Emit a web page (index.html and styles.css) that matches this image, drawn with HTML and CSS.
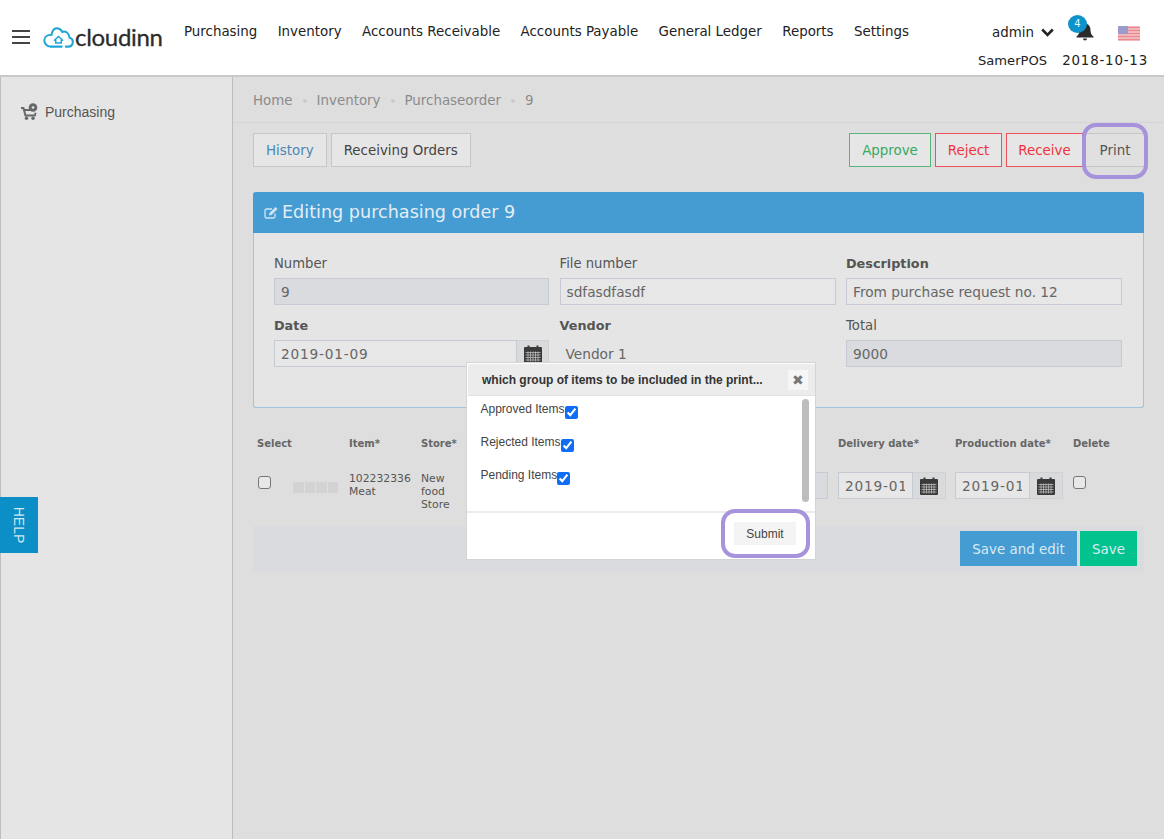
FILE: index.html
```html
<!DOCTYPE html>
<html lang="en">
<head>
    <meta charset="UTF-8">
    <meta name="viewport" content="width=device-width, initial-scale=1.0">
    <title>Editing purchasing order 9</title>
    <link rel="stylesheet" href="styles.css">
</head>
<body>

<svg class="defs" width="0" height="0">
    <symbol id="calendar" viewBox="0 0 18 18">
        <path fill="#3a3a3a" d="M1 2h2.5V0.5h2V2h7V0.5h2V2H17a1 1 0 0 1 1 1v14a1 1 0 0 1-1 1H1a1 1 0 0 1-1-1V3a1 1 0 0 1 1-1z"/>
        <path stroke="#bbb" stroke-width="0.8" fill="none" d="M1.5 7.5h15M1.5 10h15M1.5 12.5h15M1.5 15h15M4 6.5v10M6.5 6.5v10M9 6.5v10M11.5 6.5v10M14 6.5v10"/>
    </symbol>
</svg>

<header class="topbar">
    <svg class="burger" width="18" height="14" viewBox="0 0 18 14"><path stroke="#444" stroke-width="2" d="M0 1h18M0 7h18M0 13h18"/></svg>
    <div class="logo">
        <svg width="31" height="22" viewBox="0 0 33 24" fill="none" stroke="#1fa5d8" stroke-width="2.200" stroke-linecap="round">
            <path d="M24.500 22.500h2.500a5 5 0 0 0 1.500-9.800C28 7.500 24 5 20.500 6.500 18.500 2 12 0.500 10 6c-.5 1-1 2-1 3.500C5 9.500 1 11.500 1 15.500c0 4 3 7 7 7h12"/>
            <path stroke-width="1.600" d="M12 15.500l4.500-4 4.500 4M13.500 15v3.500h6V15"/>
        </svg>
        <span class="logo-text">cloudinn</span>
    </div>
    <nav class="mainnav">
        <a href="#">Purchasing</a>
        <a href="#">Inventory</a>
        <a href="#">Accounts Receivable</a>
        <a href="#">Accounts Payable</a>
        <a href="#">General Ledger</a>
        <a href="#">Reports</a>
        <a href="#">Settings</a>
    </nav>
    <div class="userbox">
        <div class="userrow">
            <span>admin</span>
            <svg class="chevron" width="13" height="9" viewBox="0 0 13 9"><path fill="none" stroke="#222" stroke-width="2.600" d="M1.200 1.500l5.300 5.300 5.300-5.300"/></svg>
            <span class="bell">
                <svg width="18" height="20" viewBox="0 0 18 20"><path fill="#2b2b2b" d="M9 1.500c.8 0 1.400.6 1.400 1.300C13 3.500 14.500 6 14.500 9c0 3 .8 5 3 6.500v1H.5v-1c2.200-1.500 3-3.500 3-6.500 0-3 1.500-5.500 4.100-6.200 0-.7.600-1.300 1.400-1.300zM7 17.500h4a2 2 0 0 1-4 0z"/></svg>
                <span class="badge">4</span>
            </span>
            <svg class="flag" width="22" height="15" viewBox="0 0 22 15">
                <rect width="22" height="15" rx="1.500" fill="#f5c6c8"/>
                <path stroke="#e98a90" stroke-width="1.300" d="M0 1.500h22M0 4.500h22M0 7.500h22M0 10.500h22M0 13.500h22"/>
                <rect width="10" height="8" rx="1" fill="#9a9dcc"/>
            </svg>
        </div>
        <div class="userrow second">
            <span class="shop">SamerPOS</span>
            <span class="date-val">2018-10-13</span>
        </div>
    </div>
</header>

<div class="layout">
    <aside class="sidebar">
        <a class="side-link" href="#">
            <svg width="17" height="17" viewBox="0 0 17 17" fill="#65676a"><path d="M0 4h3.200l.6 2H9v2H4.300l.9 3.500h8l.5-2 1.800.4-.9 3.600H3.700L1.700 6H0z"/><circle cx="5.500" cy="15.300" r="1.700"/><circle cx="12" cy="15.300" r="1.700"/><circle cx="12" cy="4.500" r="4.300"/><circle cx="12" cy="4.500" r="1.300" fill="#e5e5e5"/></svg>
            Purchasing
        </a>
    </aside>

    <main class="content">
        <div class="breadcrumb">
            <span>Home</span><i></i><span>Inventory</span><i></i><span>Purchaseorder</span><i></i><span>9</span>
        </div>

        <div class="toolbar">
            <div class="tabs">
                <button class="btn btn-history">History</button>
                <button class="btn">Receiving Orders</button>
            </div>
            <div class="actions">
                <button class="btn btn-approve">Approve</button>
                <button class="btn btn-red btn-reject">Reject</button>
                <button class="btn btn-red btn-receive">Receive</button>
                <button class="btn btn-print">Print<span class="ring ring-print"></span></button>
            </div>
        </div>

        <section class="panel">
            <h2 class="panel-title">
                <svg width="14" height="13" viewBox="0 0 14 13" fill="none" stroke="#cfe4f3" stroke-width="1.300"><path d="M11 7.500v3a1.500 1.500 0 0 1-1.500 1.500h-7A1.500 1.500 0 0 1 1 10.500v-6A1.500 1.500 0 0 1 2.500 3H8"/><path fill="#cfe4f3" stroke="none" d="M11.500 1l2 2-6 6-2.500.5.500-2.500z"/></svg>
                Editing purchasing order 9
            </h2>
            <div class="panel-body">
                <div class="field">
                    <label>Number</label>
                    <input class="input locked" type="text" value="9" readonly>
                </div>
                <div class="field">
                    <label>File number</label>
                    <input class="input" type="text" value="sdfasdfasdf">
                </div>
                <div class="field">
                    <label class="strong">Description</label>
                    <input class="input" type="text" value="From purchase request no. 12">
                </div>
                <div class="field">
                    <label class="strong">Date</label>
                    <div class="date-group">
                        <input class="input date-val" type="text" value="2019-01-09">
                        <span class="date-btn"><svg width="18" height="18"><use href="#calendar"/></svg></span>
                    </div>
                </div>
                <div class="field">
                    <label class="strong">Vendor</label>
                    <div class="static-value">Vendor 1</div>
                </div>
                <div class="field">
                    <label>Total</label>
                    <input class="input locked" type="text" value="9000" readonly>
                </div>
            </div>
        </section>

        <div class="items-grid">
            <div class="th">Select</div>
            <div class="th"></div>
            <div class="th">Item*</div>
            <div class="th">Store*</div>
            <div class="th"></div>
            <div class="th">Delivery date*</div>
            <div class="th">Production date*</div>
            <div class="th">Delete</div>

            <div class="td"><input class="row-check first" type="checkbox"></div>
            <div class="td"><div class="thumbs"><b></b><b></b><b></b><b></b></div></div>
            <div class="td small">102232336<br>Meat</div>
            <div class="td small">New<br>food<br>Store</div>
            <div class="td"><input class="input stub" type="text"></div>
            <div class="td">
                <div class="date-group">
                    <input class="input date-val" type="text" value="2019-01-09">
                    <span class="date-btn"><svg width="18" height="18"><use href="#calendar"/></svg></span>
                </div>
            </div>
            <div class="td">
                <div class="date-group">
                    <input class="input date-val" type="text" value="2019-01-09">
                    <span class="date-btn"><svg width="18" height="18"><use href="#calendar"/></svg></span>
                </div>
            </div>
            <div class="td"><input class="row-check" type="checkbox"></div>
        </div>

        <div class="savebar">
            <button class="btn-save blue">Save and edit</button>
            <button class="btn-save green">Save</button>
        </div>
    </main>
</div>

<a class="help-tab" href="#"><span>HELP</span></a>

<div class="modal">
    <div class="modal-head">
        <span class="modal-title">which group of items to be included in the print...</span>
        <span class="modal-close">&#10006;</span>
    </div>
    <div class="modal-body">
        <div class="check-row"><label>Approved Items</label><input type="checkbox" checked></div>
        <div class="check-row"><label>Rejected Items</label><input type="checkbox" checked></div>
        <div class="check-row"><label>Pending Items</label><input type="checkbox" checked></div>
        <div class="scroll-thumb"></div>
    </div>
    <div class="modal-foot">
        <button class="btn-submit">Submit<span class="ring ring-submit"></span></button>
    </div>
</div>

</body>
</html>
```

FILE: styles.css
```css
* {
    box-sizing: border-box;
}
html, body {
    margin: 0;
    height: 839px;
    overflow: hidden;
}
body {
    font-family: "DejaVu Sans", sans-serif;
    font-size: 13.400px;
    color: #444;
    background-color: #dedede;
    position: relative;
}
a {
    color: inherit;
    text-decoration: none;
}
.defs {
    position: absolute;
}
.date-val {
    letter-spacing: 0.8px;
}

/* top bar */
.topbar {
    height: 77px;
    background-color: #fff;
    border-bottom: 2px solid #c9c9c9;
    display: flex;
    align-items: flex-start;
    padding-left: 12px;
}
.burger {
    margin-top: 30px;
}
.logo {
    display: flex;
    flex: none;
    align-items: center;
    margin-left: 13px;
    margin-top: 25px;
    width: 141px;
}
.logo-text {
    font-family: Lato, sans-serif;
    font-size: 24px;
    line-height: 24px;
    color: #2c2c2c;
    margin-left: 1px;
    letter-spacing: -0.3px;
    -webkit-text-stroke: 0.3px #2c2c2c;
}
.mainnav {
    display: flex;
    gap: 20.400px;
    margin-top: 23px;
    line-height: 18px;
    color: #222;
}
.userbox {
    margin-left: auto;
    padding-right: 16px;
    width: 186px;
    color: #222;
}
.userrow {
    display: flex;
    align-items: center;
    height: 22px;
    margin-top: 21px;
    padding-left: 14px;
}
.userrow.second {
    margin-top: 6px;
    padding-left: 0;
    justify-content: space-between;
}
.shop {
    font-size: 13.100px;
}
.chevron {
    margin-left: 7px;
}
.bell {
    position: relative;
    margin-left: 22px;
    margin-top: -2px;
    display: flex;
}
.badge {
    position: absolute;
    left: -8px;
    top: -6px;
    width: 19px;
    height: 18px;
    border-radius: 50%;
    background-color: #0d93c9;
    color: #dff;
    font-size: 10px;
    line-height: 18px;
    text-align: center;
}
.flag {
    margin-left: 24px;
    margin-top: 2px;
}

/* sidebar + content */
.layout {
    display: flex;
    height: 762px;
}
.sidebar {
    width: 233px;
    background-color: #e5e5e5;
    border-left: 1px solid #bdbdbd;
    border-right: 1px solid #bdbdbd;
    padding: 26px 0 0 20px;
}
.side-link {
    display: flex;
    align-items: center;
    gap: 7px;
    color: #555;
    font-family: "Liberation Sans", sans-serif;
    font-size: 14px;
}
.content {
    flex: 1;
    padding: 0 20px;
    position: relative;
}
.breadcrumb {
    height: 46px;
    margin-left: -20px;
    margin-right: -20px;
    padding: 2px 0 0 20px;
    border-bottom: 1px solid #d5d5d5;
    display: flex;
    align-items: center;
    gap: 10px;
    color: #8b8b8b;
}
.breadcrumb i {
    width: 4px;
    height: 4px;
    background-color: #cbcbcb;
    border-radius: 50%;
}
.toolbar {
    display: flex;
    justify-content: space-between;
    margin-top: 10px;
}
.tabs, .actions {
    display: flex;
    gap: 4px;
}
.btn {
    height: 34px;
    padding: 0 12px;
    font-family: inherit;
    font-size: 13.400px;
    background-color: #e6e6e6;
    border: 1px solid #c4c6c8;
    color: #444;
}
.btn-history {
    color: #4b87b5;
}
.btn-approve {
    width: 82px;
    padding: 0;
    color: #37a963;
    border-color: #5cb47d;
}
.btn-red {
    padding: 0;
    color: #f0323c;
    border-color: #ee5158;
}
.btn-reject {
    width: 67px;
}
.btn-receive {
    width: 77px;
}
.btn-print {
    position: relative;
    width: 61px;
    padding: 0 0 0 3px;
    color: #555;
    margin-left: -4px;
    background-color: #e0e0e0;
    border-width: 1px 0;
}
.ring {
    position: absolute;
    border: 4px solid #a693dc;
    border-radius: 14px;
    pointer-events: none;
}
.ring-print {
    left: -1px;
    top: -11px;
    right: -4px;
    bottom: -13px;
}
.ring-submit {
    left: -13px;
    top: -13px;
    right: -14px;
    bottom: -13px;
}

/* order panel */
.panel {
    margin-top: 25px;
    height: 216px;
    background-color: #e5e5e5;
    border: 1px solid #9fc4dd;
    border-top: 0;
    border-radius: 3px;
}
.panel-title {
    margin: 0 -1px;
    height: 41px;
    background-color: #459cd3;
    border-radius: 3px 3px 0 0;
    color: #e4edf4;
    font-size: 17.600px;
    font-weight: normal;
    display: flex;
    align-items: center;
    gap: 4px;
    padding: 0 0 1px 11px;
}
.panel-body {
    display: grid;
    grid-template-columns: 275px 276px 276px;
    column-gap: 10.500px;
    row-gap: 11px;
    padding: 21px 0 0 20px;
}
.field label {
    display: block;
    height: 24px;
    line-height: 20px;
    font-size: 13.200px;
    color: #555;
}
.field label.strong {
    font-size: 12.800px;
    font-weight: bold;
}
.input {
    display: block;
    width: 100%;
    height: 27px;
    padding: 0 6px;
    font-family: inherit;
    font-size: 13.700px;
    color: #666;
    background-color: #e7e7e7;
    border: 1px solid #c6cbd3;
    border-radius: 0;
    outline: none;
}
.input.locked {
    background-color: #d9dbdf;
}
.date-group {
    display: flex;
}
.date-group .input {
    flex: 1;
    min-width: 0;
}
.date-btn {
    width: 32px;
    height: 27px;
    flex: none;
    background-color: #d9dadb;
    border: 1px solid #cfd1d4;
    border-left: 0;
    display: flex;
    align-items: center;
    justify-content: center;
}
.static-value {
    height: 27px;
    line-height: 28px;
    padding-left: 6px;
    color: #666;
    font-size: 13.700px;
}

/* item table */
.items-grid {
    display: grid;
    grid-template-columns: 36px 56px 72px 56px 361px 117px 118px 71px;
    grid-template-rows: 59px 59px;
    padding-left: 4px;
}
.th {
    font-size: 10px;
    font-weight: bold;
    color: #666;
    padding-top: 30px;
}
.row-check {
    appearance: none;
    display: block;
    margin: 9px 0 0;
    width: 13px;
    height: 13px;
    background-color: #e8e8e8;
    border: 1px solid #777;
    border-radius: 3px;
}
.row-check.first {
    margin-left: 1px;
}
.td.small {
    font-size: 10.800px;
    line-height: 13px;
    color: #555;
    padding-top: 5px;
}
.thumbs {
    display: flex;
    gap: 1px;
    margin-top: 15px;
}
.thumbs b {
    width: 10.500px;
    height: 11px;
    background-color: #d3d3d3;
}
.input.stub {
    width: 351px;
    height: 27px;
    margin-top: 5px;
    background-color: #d9dbdf;
}
.td .date-group {
    width: 108px;
    margin-top: 5px;
}
.td .date-group .input {
    padding: 0 7px 0 6px;
    overflow: hidden;
}
.td .date-btn {
    width: 33px;
}
.savebar {
    height: 46px;
    background-color: #d9dbdf;
    display: flex;
    justify-content: flex-end;
    gap: 3px;
    padding: 5px 7px 0 0;
}
.btn-save {
    height: 35px;
    border: 0;
    padding: 1px 0 0;
    font-family: inherit;
    font-size: 13.400px;
    color: #dbeaf2;
}
.btn-save.blue {
    width: 117px;
    background-color: #459cd3;
}
.btn-save.green {
    width: 57px;
    background-color: #02c38e;
}

/* help tab */
.help-tab {
    position: absolute;
    left: 0;
    top: 497px;
    width: 38px;
    height: 56px;
    background-color: #0b8fc6;
    color: #cfe7f2;
    font-family: "Liberation Sans", sans-serif;
    font-size: 14px;
    display: flex;
    align-items: center;
    justify-content: center;
}
.help-tab span {
    transform: rotate(90deg);
}

/* print dialog */
.modal {
    position: absolute;
    left: 466px;
    top: 362px;
    width: 350px;
    height: 198px;
    background-color: #fff;
    border: 1px solid #d4d4d4;
    font-family: "Liberation Sans", sans-serif;
    padding-top: 1px;
}
.modal-head {
    height: 32px;
    margin-left: 1px;
    background-color: #ececec;
    border-bottom: 1px solid #e2e2e2;
    display: flex;
    align-items: center;
    justify-content: space-between;
    padding: 0 7px 0 14px;
}
.modal-title {
    font-size: 12px;
    font-weight: bold;
    color: #333;
}
.modal-close {
    width: 20px;
    height: 20px;
    background-color: #f6f6f6;
    color: #777;
    font-size: 14px;
    line-height: 20px;
    text-align: center;
}
.modal-body {
    position: relative;
    height: 117px;
    border-bottom: 2px solid #ececec;
    padding: 7px 0 0 13.500px;
}
.check-row {
    display: flex;
    height: 33px;
    font-size: 12px;
    color: #444;
}
.check-row label {
    line-height: 14px;
    margin-top: -1px;
}
.check-row input {
    margin: 3px 0 0;
    width: 13px;
    height: 13px;
    accent-color: #0f6ef5;
}
.scroll-thumb {
    position: absolute;
    right: 6px;
    top: 3px;
    width: 7px;
    height: 103px;
    background-color: #bdbdbd;
    border-radius: 4px;
}
.modal-foot {
    display: flex;
    justify-content: flex-end;
    padding: 9px 19px 0 0;
}
.btn-submit {
    position: relative;
    width: 62px;
    height: 23px;
    border: 0;
    background-color: #f4f4f4;
    font-family: inherit;
    font-size: 12px;
    color: #444;
    padding: 0;
}
```
